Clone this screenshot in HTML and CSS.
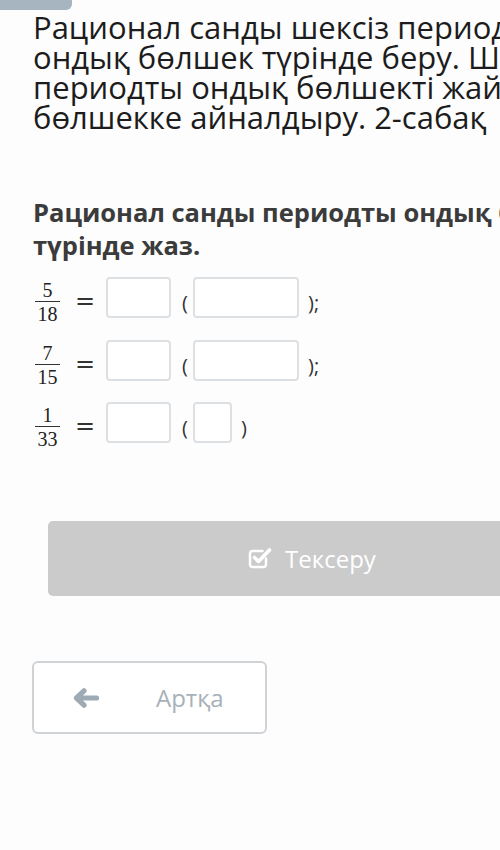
FILE: index.html
```html
<!DOCTYPE html>
<html>
<head>
    <meta charset="UTF-8">
    <title>Рационал сандар</title>
    <link rel="stylesheet" href="styles.css">
</head>
<body>
<div class="tab"></div>
<div class="page">
    <h1 class="title">Рационал санды шексіз периодты<br>ондық бөлшек түрінде беру. Шексіз<br>периодты ондық бөлшекті жай<br>бөлшекке айналдыру. 2-сабақ</h1>

    <div class="task">
        <p class="question">Рационал санды периодты ондық бөлшек<br>түрінде жаз.</p>

        <div class="row">
            <span class="frac"><span class="num">5</span><span class="den">18</span></span>
            <span class="eq">=</span>
            <span class="box"></span>
            <span class="paren open">(</span>
            <span class="box wide"></span>
            <span class="paren close">);</span>
        </div>
        <div class="row">
            <span class="frac"><span class="num">7</span><span class="den">15</span></span>
            <span class="eq">=</span>
            <span class="box"></span>
            <span class="paren open">(</span>
            <span class="box wide"></span>
            <span class="paren close">);</span>
        </div>
        <div class="row">
            <span class="frac"><span class="num">1</span><span class="den">33</span></span>
            <span class="eq">=</span>
            <span class="box"></span>
            <span class="paren open">(</span>
            <span class="box small"></span>
            <span class="paren close">)</span>
        </div>
    </div>

    <button class="check-btn">
        <svg class="check-icon" width="24" height="23" viewBox="0 0 24 23">
            <path d="M18 12.5v6a2.5 2.5 0 0 1-2.5 2.5h-11A2.5 2.5 0 0 1 2 18.5v-11A2.5 2.5 0 0 1 4.5 5h10" fill="none" stroke="#fff" stroke-width="2.5" stroke-linecap="round"/>
            <path d="M6.5 11.5l4 4L21.5 4" fill="none" stroke="#fff" stroke-width="3.6" stroke-linecap="round" stroke-linejoin="round"/>
        </svg>
        <span>Тексеру</span>
    </button>

    <button class="back-btn">
        <svg class="back-icon" width="27" height="20" viewBox="0 0 27 20">
            <path d="M11 2.8L3.5 10l7.5 7.2M4.5 10h19" fill="none" stroke="#9eabb5" stroke-width="5.2" stroke-linecap="round" stroke-linejoin="round"/>
        </svg>
        <span>Артқа</span>
    </button>
</div>
</body>
</html>
```

FILE: styles.css
```css
html, body {
    margin: 0;
    overflow: hidden;
}
body {
    font-family: "Open Sans", "Noto Sans", sans-serif;
    background-color: #fdfdfd;
    color: #1c1c1c;
    width: 640px;
}
.tab {
    width: 72px;
    height: 10px;
    background-color: #a6b5bf;
    border-bottom-right-radius: 6px;
}
.page {
    padding: 2px 0 0 33px;
}
.title {
    margin: 0;
    font-size: 31px;
    font-weight: 400;
    line-height: 30px;
    white-space: nowrap;
}
.task {
    margin-top: 64px;
}
.question {
    margin: 0 0 15px 0;
    font-size: 25.5px;
    font-weight: 700;
    line-height: 33px;
    color: #3b3b3b;
    white-space: nowrap;
}

/* one line of the exercise: fraction = [box] ( [box] ); */
.row {
    display: flex;
    align-items: flex-start;
    height: 41px;
    margin-bottom: 21.5px;
}
.frac {
    display: inline-flex;
    flex-direction: column;
    align-items: center;
    width: 25px;
    margin: 5px 0 0 2px;
    font-family: "Liberation Serif", "DejaVu Serif", serif;
    font-size: 20px;
    line-height: 16px;
    color: #222;
}
.num {
    width: 100%;
    padding-bottom: 3px;
    border-bottom: 1px solid #333;
    text-align: center;
}
.den {
    padding-top: 4px;
}
.eq {
    margin: 12px 11px 0 15px;
    font-family: "DejaVu Serif", serif;
    font-size: 24px;
    line-height: 24px;
    color: #333;
}
.box {
    box-sizing: border-box;
    width: 65px;
    height: 41px;
    border: 2px solid #dde0e3;
    border-radius: 4px;
    background: #fff;
}
.box.wide {
    width: 106px;
}
.box.small {
    width: 39px;
}
.paren {
    margin-top: 16px;
    font-size: 20px;
    line-height: 20px;
    color: #333;
}
.paren.open {
    margin-left: 11px;
    margin-right: 5px;
}
.paren.close {
    margin-left: 9px;
}

.check-btn {
    display: flex;
    align-items: center;
    justify-content: center;
    gap: 13px;
    width: 528px;
    height: 75px;
    margin: 78px 0 0 15px;
    padding: 0;
    border: none;
    border-radius: 5px;
    background-color: #cbcbcb;
    color: #fff;
    font-family: "Open Sans", sans-serif;
    font-size: 24px;
}
.check-icon {
    margin-top: -3px;
}
.back-btn {
    display: flex;
    align-items: center;
    box-sizing: border-box;
    width: 235px;
    height: 73px;
    margin: 65px 0 0 -1px;
    padding: 0 0 0 39px;
    border: 2px solid #cfd3d6;
    border-radius: 6px;
    background-color: #fff;
    color: #a7b1b9;
    font-family: "Open Sans", sans-serif;
    font-size: 24px;
}
.back-icon {
    margin-right: 56px;
}
```
